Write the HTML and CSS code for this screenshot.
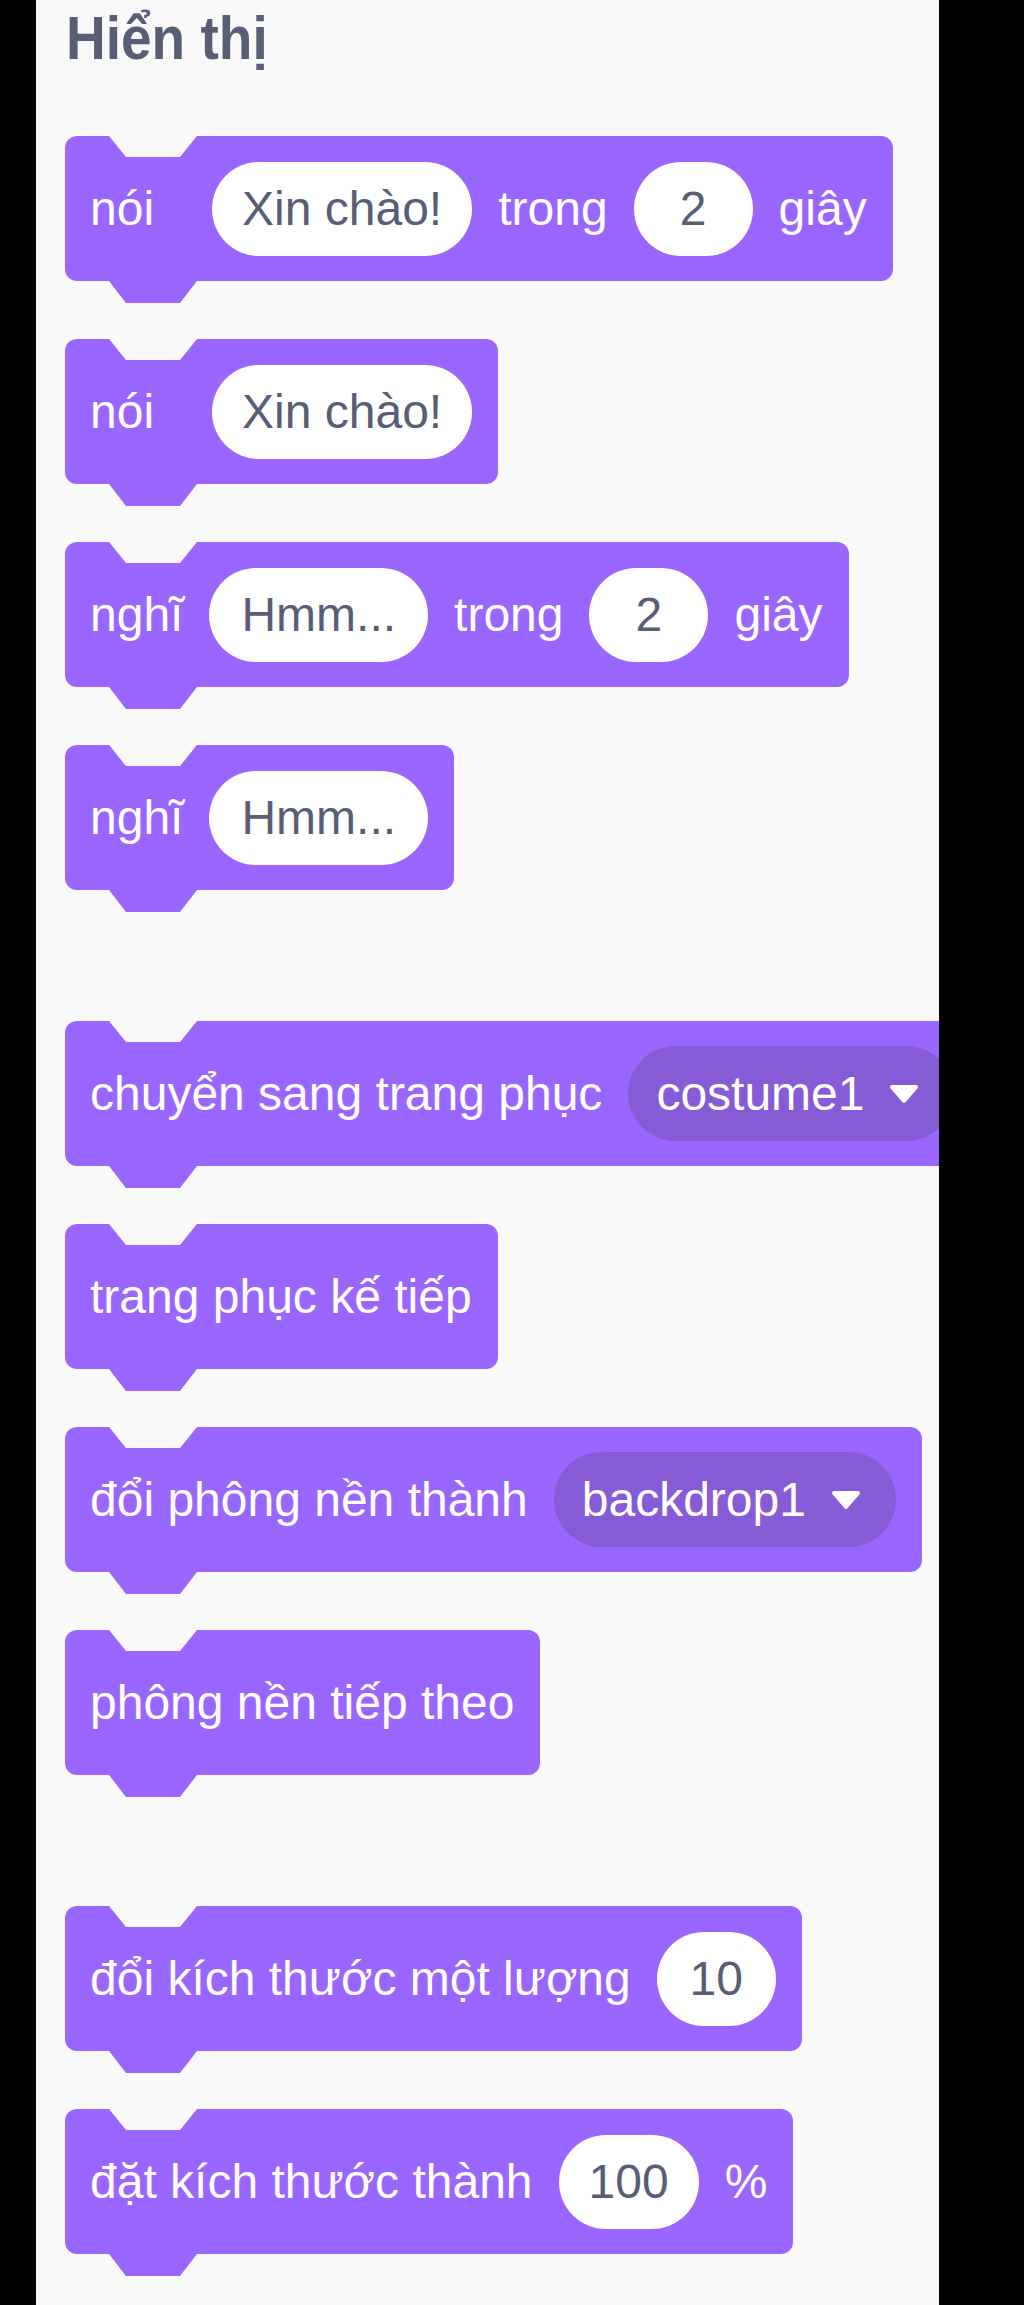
FILE: index.html
```html
<!DOCTYPE html>
<html lang="vi">
<head>
<meta charset="utf-8">
<title>Hiển thị</title>
<link rel="stylesheet" href="styles.css">
</head>
<body>
<div class="panel">
  <h2 class="heading">Hiển thị</h2>

  <div class="group group-first">
    <div class="block">
      <span class="label label-short">nói</span>
      <span class="input">Xin chào!</span>
      <span class="label">trong</span>
      <span class="input">2</span>
      <span class="label">giây</span>
    </div>
    <div class="block">
      <span class="label label-short">nói</span>
      <span class="input">Xin chào!</span>
    </div>
    <div class="block">
      <span class="label">nghĩ</span>
      <span class="input input-mid">Hmm...</span>
      <span class="label">trong</span>
      <span class="input">2</span>
      <span class="label">giây</span>
    </div>
    <div class="block">
      <span class="label">nghĩ</span>
      <span class="input input-mid">Hmm...</span>
    </div>
  </div>

  <div class="group">
    <div class="block">
      <span class="label">chuyển sang trang phục</span>
      <span class="dropdown"><span class="dropdown-text">costume1</span><svg class="arrow" width="32" height="20" viewBox="0 0 32 20"><path d="M4 3 H28 L16 17 Z" fill="#fff" stroke="#fff" stroke-width="4" stroke-linejoin="round"/></svg></span>
    </div>
    <div class="block">
      <span class="label">trang phục kế tiếp</span>
    </div>
    <div class="block">
      <span class="label">đổi phông nền thành</span>
      <span class="dropdown"><span class="dropdown-text">backdrop1</span><svg class="arrow" width="32" height="20" viewBox="0 0 32 20"><path d="M4 3 H28 L16 17 Z" fill="#fff" stroke="#fff" stroke-width="4" stroke-linejoin="round"/></svg></span>
    </div>
    <div class="block">
      <span class="label">phông nền tiếp theo</span>
    </div>
  </div>

  <div class="group">
    <div class="block">
      <span class="label">đổi kích thước một lượng</span>
      <span class="input">10</span>
    </div>
    <div class="block">
      <span class="label">đặt kích thước thành</span>
      <span class="input">100</span>
      <span class="label">%</span>
    </div>
  </div>
</div>
</body>
</html>
```

FILE: styles.css
```css
html, body {
  margin: 0;
  padding: 0;
  background: #000;
}

body {
  font-family: "Liberation Sans", Arial, Helvetica, sans-serif;
}

.panel {
  margin-left: 36px;
  width: 903px;
  height: 2305px;
  box-sizing: border-box;
  padding: 6px 0 0 29px;
  background: #f9f9f9;
  overflow: hidden;
}

.heading {
  margin: 0 0 0 1px;
  height: 64px;
  font-size: 55px;
  line-height: 64px;
  font-weight: 700;
  color: #575e75;
  transform: scaleY(1.1);
  transform-origin: left center;
}

.group {
  display: flex;
  flex-direction: column;
  align-items: flex-start;
  gap: 58px;
  margin-top: 131px;
}

.group-first {
  margin-top: 66px;
}

.block {
  position: relative;
  display: flex;
  align-items: center;
  gap: 26px;
  height: 145px;
  box-sizing: border-box;
  padding: 0 26px 0 25px;
  background: #9966ff;
  border-radius: 12px;
  white-space: nowrap;
  font-size: 48px;
  color: #fff;
  flex: none;
}

/* notch cut into the top edge */
.block::before {
  content: "";
  position: absolute;
  top: 0;
  left: 44px;
  width: 88px;
  height: 21px;
  background: #f9f9f9;
  clip-path: polygon(0 0, 100% 0, calc(100% - 17px) 100%, 17px 100%);
}

/* tab sticking out of the bottom edge */
.block::after {
  content: "";
  position: absolute;
  top: 100%;
  left: 44px;
  width: 88px;
  height: 22px;
  background: #9966ff;
  clip-path: polygon(0 0, 100% 0, calc(100% - 17px) 100%, 17px 100%);
}

.label {
  line-height: 1;
}

.label-short {
  margin-right: 32px;
}

.input {
  display: flex;
  align-items: center;
  justify-content: center;
  box-sizing: border-box;
  height: 94px;
  min-width: 119px;
  padding: 0 30px;
  border-radius: 47px;
  background: #fff;
  color: #575e75;
  line-height: 1;
}

.input-mid {
  padding: 0 32px;
}

.dropdown {
  display: flex;
  align-items: center;
  gap: 24px;
  box-sizing: border-box;
  height: 95px;
  padding: 0 34px 0 28px;
  border-radius: 48px;
  background: #855cd6;
  color: #fff;
  line-height: 1;
}

.arrow {
  display: block;
  flex: none;
}
```
